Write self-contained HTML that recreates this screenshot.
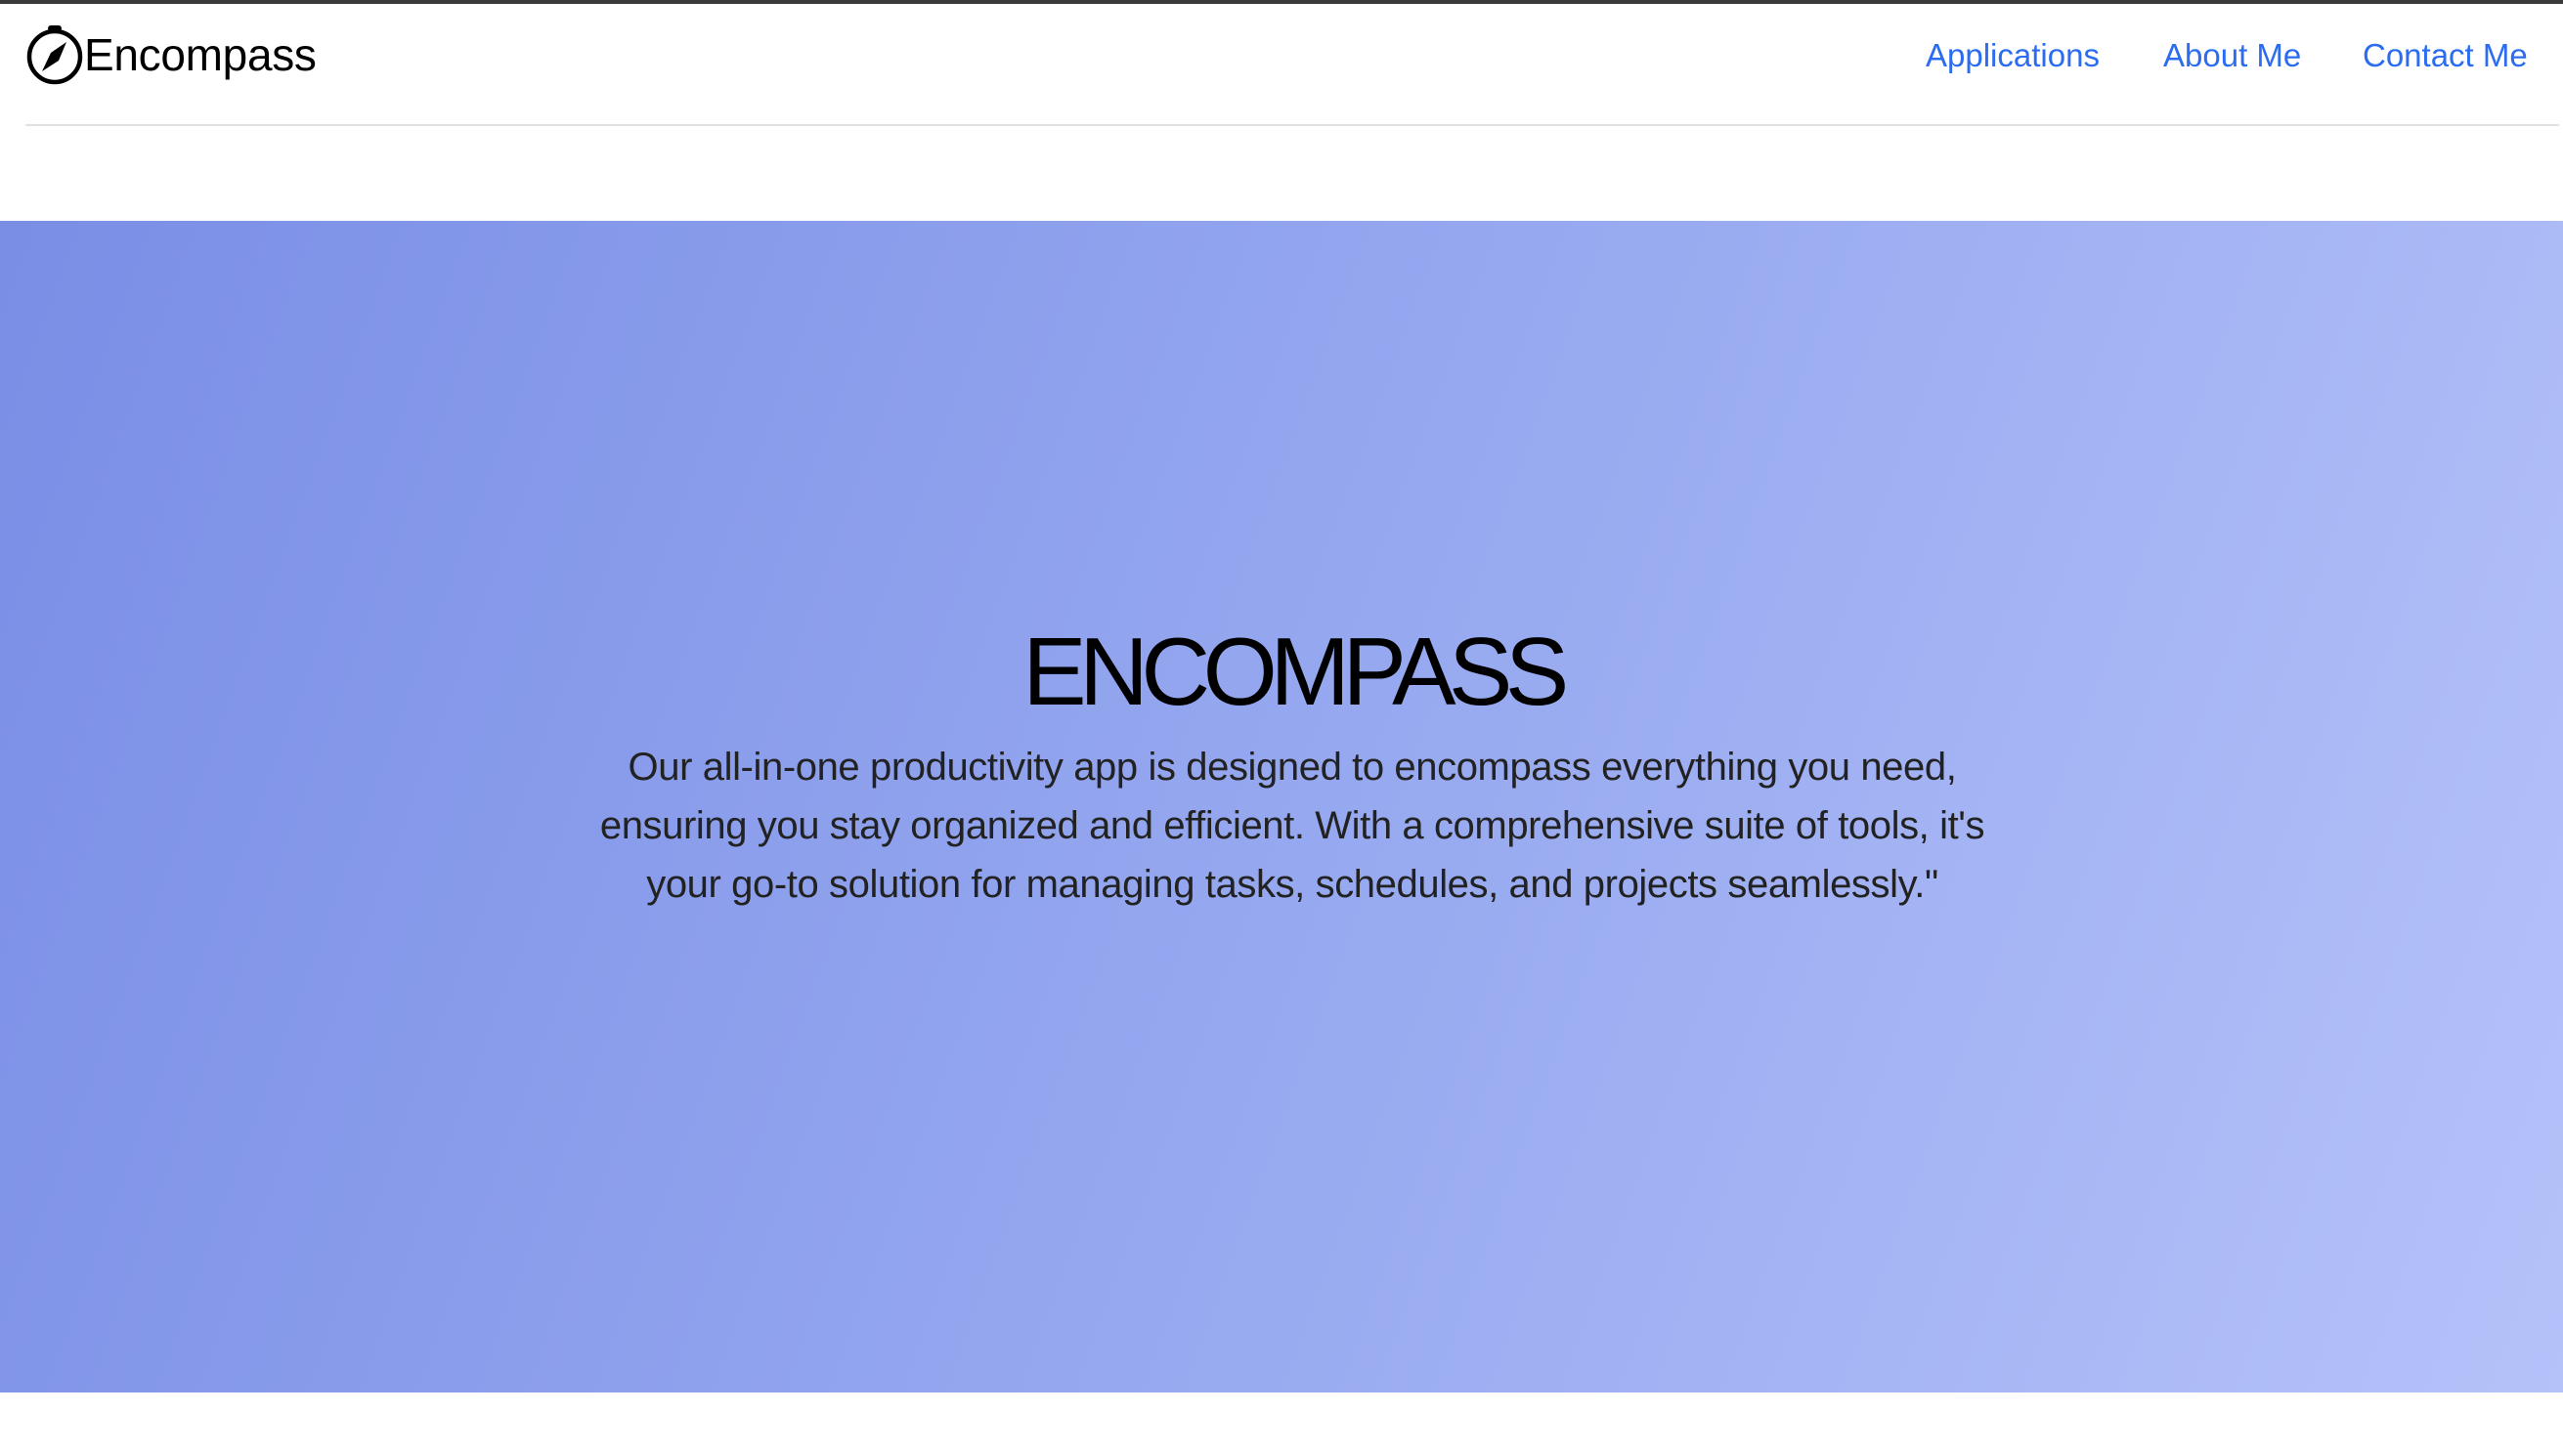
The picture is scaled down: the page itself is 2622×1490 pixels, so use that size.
<!DOCTYPE html>
<html><head><meta charset="utf-8"><style>
html,body{margin:0;padding:0;width:2622px;height:1490px;overflow:hidden;background:#fff;font-family:"Liberation Sans",sans-serif}
.top{position:absolute;left:0;top:0;width:2622px;height:4px;background:#3a3a3a}
.logo{position:absolute;left:26px;top:25px;display:flex;align-items:center}
.logo span{font-size:46px;color:#000;margin-left:0px;letter-spacing:-0.3px}
.nav a{position:absolute;top:38px;font-size:33px;color:#2b6cf0;text-decoration:none;white-space:nowrap}
.line{position:absolute;left:26px;top:127px;width:2592px;height:2px;background:#dee2e6}
.hero{position:absolute;left:0;top:226px;width:2622px;height:1199px;background:linear-gradient(110deg,#7a8ee6 0%,#98aaf0 55%,#b5c1f9 100%)}
h1{position:absolute;left:0;width:2644px;top:638px;margin:0;text-align:center;font-weight:normal;font-size:98px;letter-spacing:-7.5px;color:#000;line-height:1}
.p{position:absolute;left:0;width:2644px;top:755px;text-align:center;font-size:40px;line-height:60px;color:#222;letter-spacing:-0.4px;white-space:nowrap}
</style></head><body>
<div class="top"></div>
<div class="logo">
<svg width="60" height="62" viewBox="0 0 60 62"><rect x="23" y="1" width="14" height="6" rx="3" fill="#000"/><circle cx="30" cy="33" r="26" fill="none" stroke="#000" stroke-width="4.5"/><path d="M42 18 L34 37 L17 48 L26 29 Z" fill="#000"/></svg>
<span>Encompass</span></div>
<div class="nav"><a style="left:1970px">Applications</a><a style="left:2213px">About Me</a><a style="left:2417px">Contact Me</a></div>
<div class="line"></div>
<div class="hero"></div>
<h1>ENCOMPASS</h1>
<div class="p">Our all-in-one productivity app is designed to encompass everything you need,<br>ensuring you stay organized and efficient. With a comprehensive suite of tools, it's<br>your go-to solution for managing tasks, schedules, and projects seamlessly."</div>
</body></html>
